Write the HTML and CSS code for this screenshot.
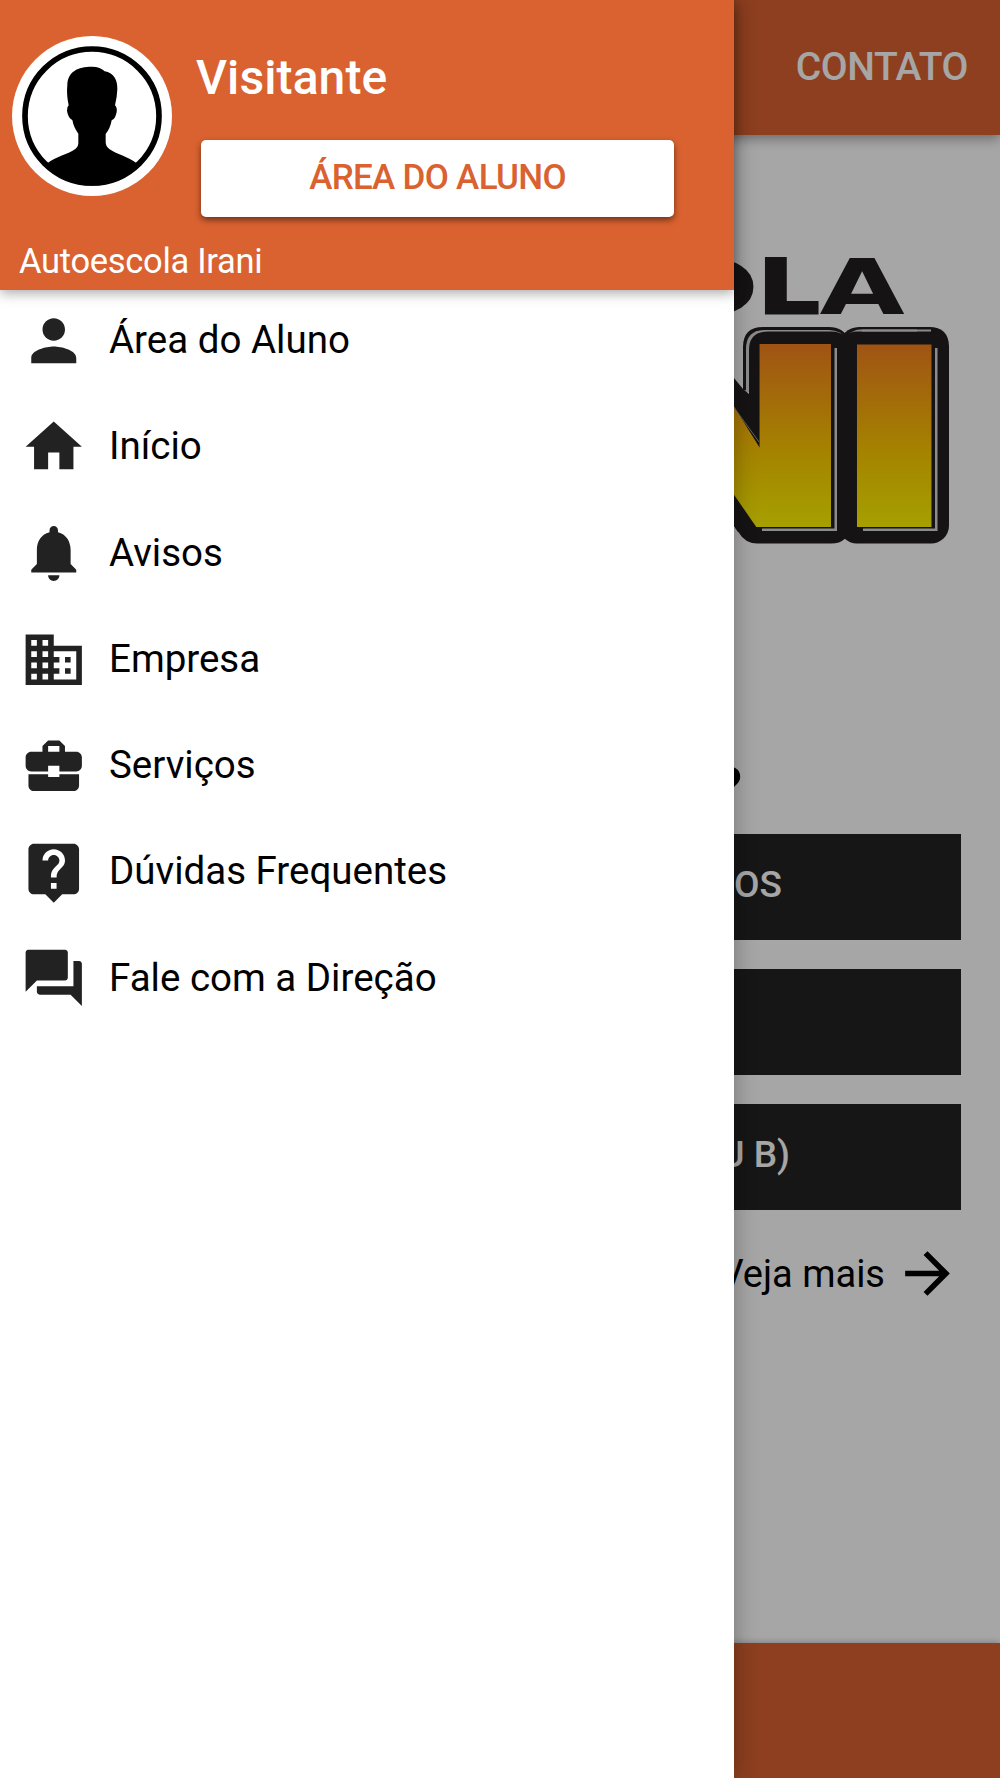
FILE: index.html
```
<!doctype html>
<html lang="pt-BR">
  <head>
    <meta charset="UTF-8" />
    <meta name="viewport" content="width=device-width, initial-scale=1.0" />
    <title>Autoescola Irani</title>
    <link rel="stylesheet" href="styles.css">
  </head>
  <body>
    <div class="page">
      <header class="toolbar">
        <span class="tab">CONTATO</span>
      </header>

      <main class="content">
        <svg class="logo" viewBox="700 240 300 310">
          <defs>
            <linearGradient id="fillN" gradientUnits="userSpaceOnUse" x1="0" y1="-52.7" x2="0" y2="0">
              <stop offset="0" stop-color="#f6811f" />
              <stop offset="0.6" stop-color="#fecb00" />
              <stop offset="1" stop-color="#fff600" />
            </linearGradient>
            <linearGradient id="fillI" gradientUnits="userSpaceOnUse" x1="0" y1="-73" x2="0" y2="0">
              <stop offset="0" stop-color="#f6811f" />
              <stop offset="0.6" stop-color="#fecb00" />
              <stop offset="1" stop-color="#fff600" />
            </linearGradient>
            <clipPath id="clipN">
              <rect x="700" y="344" width="131" height="183" />
            </clipPath>
          </defs>

          <g class="logo-small">
            <text class="logo-o" transform="translate(660.5 311.5) scale(1.45 0.91)">O</text>
            <text class="logo-l" transform="translate(758 313) scale(1.25 0.97)">L</text>
            <text transform="translate(819.5 314) scale(1.43 1)">A</text>
          </g>

          <!-- plate behind the N -->
          <path class="plate" d="M743 390V347q0-20 20-20H829q14 0 20 12V400Z" />
          <path class="shine" d="M746 392V349q0-19 19-19H829q12 0 18 10V400Z" />
          <path class="plate" d="M720 361L743 389L749 394V350q0-18.500 19-18.500H831q18 0 18 18V526q0 17.500-18 17.500H757q-12 0-19-12L720 507Z" />
          <path class="shine" d="M834.500 348h2.500v183h-75v-2.500h72.500z" />

          <!-- plate behind the I -->
          <rect class="plate" x="839" y="327" width="108" height="60" rx="20" />
          <rect class="shine" x="842" y="329.500" width="104" height="60" rx="19" />
          <rect class="plate" x="839" y="331.500" width="110" height="212" rx="18" />
          <path class="plate" d="M838 345H848V526H839z" />
          <path class="plate" d="M917 327H929Q949 327 949 347V380H917z" />
          <path class="shine" d="M862 329.500H931v2H862zM935 348h2.500v183H863v-2.500h72z" />

          <g class="logo-big">
            <g clip-path="url(#clipN)">
              <text fill="url(#fillN)" transform="translate(529 527) scale(4.067 3.47)">N</text>
            </g>
            <text fill="url(#fillI)" transform="translate(820.6 527) scale(3.963 2.503)">I</text>
          </g>
          <path class="plate" d="M730 489L757 528V532H738L730 520Z" />
          <path class="edge" d="M733 406L759 442" />
        </svg>

        <h2 class="question">?</h2>

        <div class="options">
          <div class="option"><span class="option-first">OS</span></div>
          <div class="option"></div>
          <div class="option"><span class="option-last">U B)</span></div>
        </div>

        <div class="more">
          <span class="more-label">Veja mais</span>
          <svg class="more-icon" viewBox="0 0 24 24">
            <path d="M12 4l-1.410 1.410L16.170 11H4v2h12.170l-5.580 5.590L12 20l8-8z" />
          </svg>
        </div>
      </main>

      <footer class="bottom-bar"></footer>
    </div>

    <div class="scrim"></div>

    <aside class="drawer">
      <div class="drawer-header">
        <div class="profile">
          <svg class="avatar" viewBox="0 0 480 480">
            <circle cx="240" cy="240" r="240" fill="#fff" />
            <circle cx="240" cy="240" r="201" fill="none" stroke="#000" stroke-width="17" />
            <path d="M106 382C130 362 170 354 190 339Q200 331 199 318V293Q185 274 181 252Q168 245 165 224Q165 212 170 208Q163 175 166 146C168 107 197 92 240 92Q266 92 278 106C306 111 317 132 316 160Q315 185 309 208Q316 214 314 228Q310 249 299 253Q295 277 281 294V318Q281 331 292 339C312 354 350 362 374 382Q320 449 240 449Q160 449 106 382Z" />
          </svg>
          <div class="profile-info">
            <h1 class="user-name">Visitante</h1>
            <button class="student-btn">ÁREA DO ALUNO</button>
          </div>
        </div>
        <p class="school">Autoescola Irani</p>
      </div>

      <nav class="menu">
        <a class="menu-item">
          <svg class="menu-icon" viewBox="0 0 24 24"><path d="M12 12c2.210 0 4-1.790 4-4s-1.790-4-4-4-4 1.790-4 4 1.790 4 4 4zm0 2c-2.670 0-8 1.340-8 4v2h16v-2c0-2.660-5.330-4-8-4z" /></svg>
          <span class="menu-label">Área do Aluno</span>
        </a>
        <a class="menu-item">
          <svg class="menu-icon" viewBox="0 0 24 24"><path d="M10 20v-6h4v6h5v-8h3L12 3 2 12h3v8z" /></svg>
          <span class="menu-label">Início</span>
        </a>
        <a class="menu-item">
          <svg class="menu-icon" viewBox="0 0 24 24"><path d="M12 22c1.100 0 2-.9 2-2h-4c0 1.100.89 2 2 2zm6-6v-5c0-3.070-1.640-5.640-4.500-6.320V4c0-.83-.67-1.500-1.500-1.500s-1.500.67-1.500 1.500v.68C7.630 5.360 6 7.920 6 11v5l-2 2v1h16v-1l-2-2z" /></svg>
          <span class="menu-label">Avisos</span>
        </a>
        <a class="menu-item">
          <svg class="menu-icon" viewBox="0 0 24 24"><path d="M12 7V3H2v18h20V7H12zM6 19H4v-2h2v2zm0-4H4v-2h2v2zm0-4H4V9h2v2zm0-4H4V5h2v2zm4 12H8v-2h2v2zm0-4H8v-2h2v2zm0-4H8V9h2v2zm0-4H8V5h2v2zm10 12h-8v-2h2v-2h-2v-2h2v-2h-2V9h8v10zm-2-8h-2v2h2v-2zm0 4h-2v2h2v-2z" /></svg>
          <span class="menu-label">Empresa</span>
        </a>
        <a class="menu-item">
          <svg class="menu-icon" viewBox="0 0 24 24"><path d="M10 16v-1H3.010L3 19c0 1.110.89 2 2 2h14c1.110 0 2-.89 2-2v-4h-7v1h-4zm10-9h-4.010V5l-2-2h-4l-2 2v2H4c-1.100 0-2 .9-2 2v3c0 1.110.89 2 2 2h6v-2h4v2h6c1.100 0 2-.9 2-2V9c0-1.100-.9-2-2-2zm-6 0h-4V5h4v2z" /></svg>
          <span class="menu-label">Serviços</span>
        </a>
        <a class="menu-item">
          <svg class="menu-icon" viewBox="0 0 24 24"><path d="M19 2H5c-1.110 0-2 .9-2 2v14c0 1.100.89 2 2 2h4l3 3 3-3h4c1.100 0 2-.9 2-2V4c0-1.100-.9-2-2-2zm-6 16h-2v-2h2v2zm2.070-7.750l-.9.920C13.450 11.900 13 12.500 13 14h-2v-.5c0-1.100.45-2.100 1.170-2.830l1.240-1.260c.37-.36.59-.86.59-1.410 0-1.100-.9-2-2-2s-2 .9-2 2H8c0-2.210 1.790-4 4-4s4 1.790 4 4c0 .88-.36 1.680-.93 2.250z" /></svg>
          <span class="menu-label">Dúvidas Frequentes</span>
        </a>
        <a class="menu-item">
          <svg class="menu-icon" viewBox="0 0 24 24"><path d="M21 6h-2v9H6v2c0 .55.45 1 1 1h11l4 4V7c0-.55-.45-1-1-1zm-4 6V3c0-.55-.45-1-1-1H3c-.55 0-1 .45-1 1v14l4-4h10c.55 0 1-.45 1-1z" /></svg>
          <span class="menu-label">Fale com a Direção</span>
        </a>
      </nav>
    </aside>
  </body>
</html>
```
FILE: styles.css
```
:root {
  --primary: #d96230;
  --dark: #222;
}

* {
  box-sizing: border-box;
}

body {
  position: relative;
  margin: 0;
  width: 1000px;
  height: 1778px;
  overflow: hidden;
  font-family: Roboto, sans-serif;
  color: #000;
  background: #fff;
}

h1,
h2,
p {
  margin: 0;
}

.page {
  display: flex;
  flex-direction: column;
  height: 100%;
}

.toolbar {
  display: flex;
  align-items: center;
  justify-content: flex-end;
  height: 135px;
  padding: 0 32px 1px 0;
  background: var(--primary);
  box-shadow: 0 3px 12px rgba(0, 0, 0, 0.4);
}

.tab {
  font-size: 39px;
  font-weight: 500;
  letter-spacing: -0.4px;
  color: #fff;
}

.content {
  flex: 1;
  display: flex;
  flex-direction: column;
  align-items: flex-end;
  padding-top: 105px;
}

.logo {
  display: block;
  width: 300px;
  height: 310px;
}

.logo-small {
  font: bold 77px "DejaVu Sans", sans-serif;
  fill: #221e20;
}

.logo-o {
  stroke: #221e20;
  stroke-width: 5px;
}

.logo-l {
  stroke: #221e20;
  stroke-width: 3px;
}

.logo-big {
  font: bold 100px "DejaVu Sans", sans-serif;
}

.plate {
  fill: #221e20;
}

.shine {
  fill: #d8d8d8;
}

.edge {
  fill: none;
  stroke: #999;
  stroke-width: 1;
}

.question {
  height: 283.5px;
  padding: 204px 258px 0 0;
  font-size: 54px;
  font-weight: 700;
  line-height: 66px;
}

.options {
  display: flex;
  flex-direction: column;
  gap: 29px;
  width: 922px;
  margin-right: 39px;
}

.option {
  display: flex;
  align-items: center;
  justify-content: flex-end;
  height: 106.3px;
  padding-bottom: 5px;
  font-size: 37px;
  font-weight: 500;
  color: #fff;
  background: var(--dark);
}

.option-first {
  padding-right: 179px;
}

.option-last {
  padding-right: 171px;
}

.more {
  display: flex;
  align-items: center;
  gap: 9px;
  height: 67px;
  margin: 29.5px 39px 0 0;
  font-size: 38px;
}

.more-label {
  padding-top: 2px;
}

.more-icon {
  width: 67px;
  height: 67px;
}

.bottom-bar {
  height: 135.5px;
  background: var(--primary);
  box-shadow: 0 0 7px rgba(0, 0, 0, 0.3);
}

.scrim {
  position: absolute;
  inset: 0;
  background: rgba(0, 0, 0, 0.35);
}

.drawer {
  position: absolute;
  top: 0;
  left: 0;
  width: 734px;
  height: 100%;
  background: #fff;
  box-shadow: 0 0 22px rgba(0, 0, 0, 0.3);
}

.drawer-header {
  height: 290px;
  padding: 36px 0 0 12px;
  color: #fff;
  background: var(--primary);
  box-shadow: 0 3px 12px rgba(0, 0, 0, 0.35);
}

.profile {
  display: flex;
  gap: 24px;
}

.avatar {
  width: 160px;
  height: 160px;
}

.profile-info {
  padding-top: 14px;
}

.user-name {
  font-size: 48px;
  font-weight: 500;
  line-height: 56px;
  letter-spacing: 0.1px;
}

.student-btn {
  display: block;
  width: 473px;
  height: 77px;
  margin: 34px 0 0 5px;
  padding: 0 0 2px;
  border: none;
  border-radius: 5px;
  font-family: inherit;
  font-size: 35px;
  font-weight: 500;
  letter-spacing: -0.7px;
  color: var(--primary);
  background: #fff;
  box-shadow: 0 3px 6px rgba(0, 0, 0, 0.5);
}

.school {
  padding: 24px 0 0 7px;
  font-size: 34.5px;
  line-height: 40px;
  letter-spacing: -0.3px;
}

.menu {
  display: flex;
  flex-direction: column;
  gap: 5.25px;
}

.menu-item {
  display: flex;
  align-items: center;
  gap: 22px;
  height: 101px;
  padding-left: 19.5px;
  font-size: 38.5px;
}

.menu-label {
  padding-bottom: 2px;
}

.menu-icon {
  width: 67.5px;
  height: 67.5px;
  fill: #222;
}
```
